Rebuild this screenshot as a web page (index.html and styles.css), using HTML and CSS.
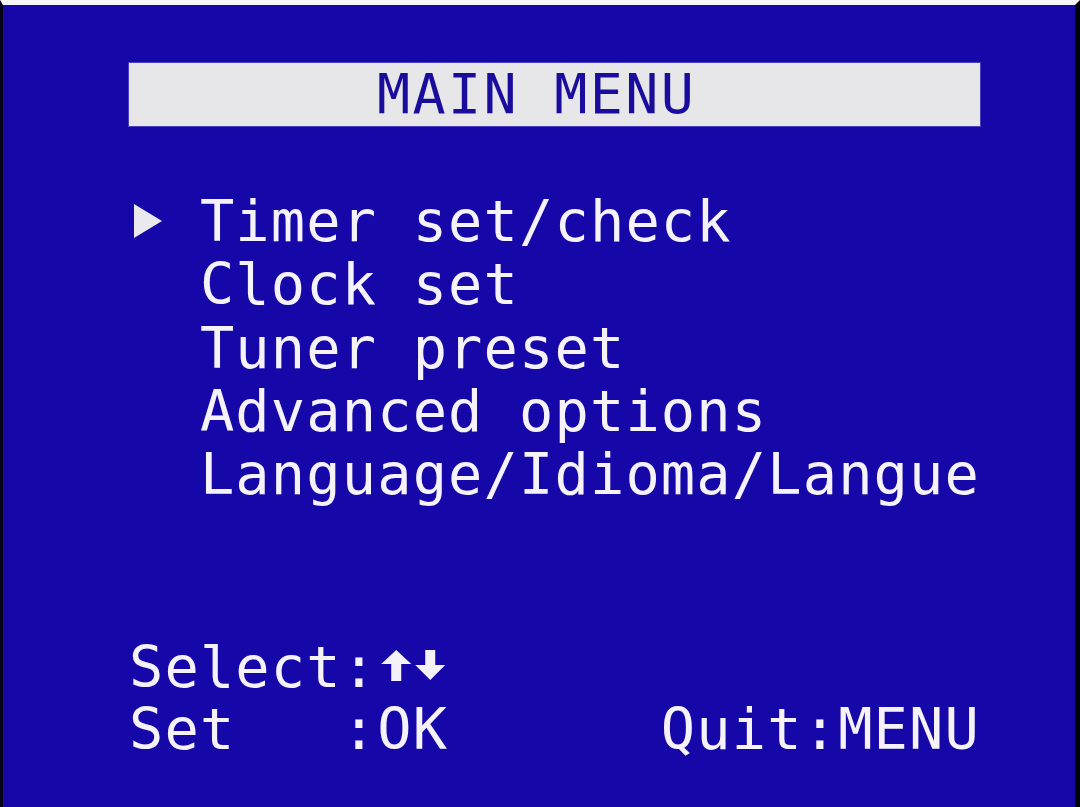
FILE: index.html
```html
<!DOCTYPE html>
<html lang="en">
<head>
<meta charset="utf-8">
<title>MAIN MENU</title>
<link rel="stylesheet" href="styles.css">
</head>
<body>
<div class="screen">
  <div class="title-bar"><span class="title-text">MAIN MENU</span></div>
  <div class="menu">
    <div class="row"><span class="marker"><svg class="tri" viewBox="0 0 71 63" width="71" height="63"><polygon points="5,14 33,31 5,48" /></svg></span>Timer set/check</div>
    <div class="row"><span class="marker"></span>Clock set</div>
    <div class="row"><span class="marker"></span>Tuner preset</div>
    <div class="row"><span class="marker"></span>Advanced options</div>
    <div class="row"><span class="marker"></span>Language/Idioma/Langue</div>
  </div>
  <div class="footer">
    <div class="frow">Select:<svg class="arrow" viewBox="0 0 35 34" width="35.46" height="34"><polygon points="19,0 34,14 24,14 24,31 14,31 14,14 4,14" /></svg><svg class="arrow" viewBox="0 0 35 34" width="35.46" height="34"><polygon points="12,0 22,0 22,15 32,15 17,30 2,15 12,15" /></svg></div>
    <div class="frow">Set   :OK      Quit:MENU</div>
  </div>
</div>
</body>
</html>
```
FILE: styles.css
```css
html, body {
  margin: 0;
  padding: 0;
  background: #000;
}

.screen {
  width: 1080px;
  height: 807px;
  box-sizing: border-box;
  background: #1607a9;
  border-top: 5px solid #f6f6f8;
  border-left: 3px solid #06021a;
  border-right: 5px solid #020008;
  padding-left: 126px;
  display: flex;
  flex-direction: column;
  overflow: hidden;
  font-family: "DejaVu Sans Mono", "Liberation Mono", monospace;
  color: #f6f2fa;
}

.title-bar {
  margin-top: 58px;
  width: 851px;
  height: 63px;
  background: #e7e7ea;
  box-shadow: 0 0 0 1px #4b3fc0;
  display: flex;
  align-items: center;
}

.title-text {
  padding-left: 248px;
  font-size: 55px;
  line-height: 63px;
  letter-spacing: 2.35px;
  color: #1a0c9c;
  white-space: pre;
}

.menu {
  margin-top: 64px;
  font-size: 57px;
  letter-spacing: 1.14px;
  line-height: 63.3px;
}

.row {
  white-space: pre;
  height: 63.3px;
}

.marker {
  display: inline-block;
  width: 70.92px;
  height: 63.3px;
  vertical-align: top;
  position: relative;
}

.tri {
  position: absolute;
  left: 0;
  top: 0;
}

.tri polygon {
  fill: #e9e9ee;
}

.footer {
  margin-top: 130px;
  font-size: 57px;
  letter-spacing: 1.14px;
  line-height: 62px;
}

.frow {
  white-space: pre;
  height: 62px;
}

.arrow {
  display: inline-block;
  vertical-align: 3px;
}

.arrow polygon {
  fill: #f4f2f8;
}
```
